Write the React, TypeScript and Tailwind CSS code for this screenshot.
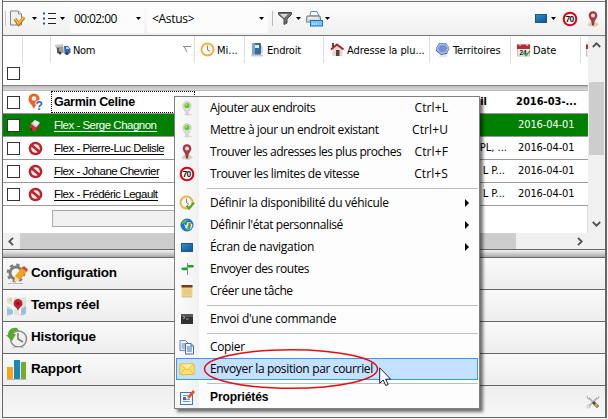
import React from 'react';

const TAHOMA = "font-['DejaVu_Sans_Condensed','DejaVu_Sans',sans-serif]";

function Svg({ w = 16, h = 16, box = '0 0 16 16', className = '', children }: { w?: number; h?: number; box?: string; className?: string; children: React.ReactNode }) {
  return <svg width={w} height={h} viewBox={box} className={`block shrink-0 ${className}`}>{children}</svg>;
}

const Caret = ({ className = '' }: { className?: string }) => (
  <Svg w={5} h={3} box="0 0 5 3" className={className}><path d="M0 0h5L2.5 3z" fill="#000" /></Svg>
);
const PinGreen = () => (
  <Svg>
    <ellipse cx="9" cy="14.5" rx="4" ry="1" fill="#ddd" />
    <path d="M8 1.5a4.3 4.3 0 0 0-4.3 4.3C3.700 8.500 6 10 7.300 14.500h1.500C9.500 10 12.300 8.500 12.300 5.800A4.300 4.300 0 0 0 8 1.500z" fill="#d9dcde" stroke="#b9bdc0" strokeWidth=".5" />
    <circle cx="8" cy="5.500" r="2.600" fill="#62c916" /><circle cx="7.300" cy="4.800" r="1" fill="#a6ec62" />
  </Svg>
);
const PinRed = ({ size = 16 }: { size?: number }) => (
  <Svg w={size} h={size}>
    <path d="M3 13l2-2h6l3 2.500-4 2.500-7-1z" fill="#dccdb4" />
    <path d="M8 .5a4 4 0 0 0-4 4C4 7.500 6.500 8 7.200 13h1.600C9.500 8 12 7.500 12 4.500a4 4 0 0 0-4-4z" fill="#a83a44" stroke="#822932" strokeWidth=".5" />
    <circle cx="8" cy="4.500" r="2" fill="#f0dfe0" /><path d="M6.500 13h3l-1.500 2z" fill="#7d3a38" />
  </Svg>
);
const Speed = () => (
  <Svg>
    <circle cx="8" cy="8" r="6.300" fill="#fff" stroke="#d8040c" strokeWidth="2" />
    <text x="7.600" y="11" textAnchor="middle" fontSize="8.500" fontWeight="700" fontFamily="Liberation Sans" fill="#111" letterSpacing="-.7">70</text>
  </Svg>
);
const Screen = ({ w = 12, h = 9 }: { w?: number; h?: number }) => (
  <Svg w={w} h={h} box="0 0 12 9">
    <defs><linearGradient id="scr" x1="0" y1="0" x2="1" y2="1"><stop stopColor="#2d8dd0" /><stop offset="1" stopColor="#0a5593" /></linearGradient></defs>
    <rect x=".5" y=".5" width="11" height="8" fill="url(#scr)" stroke="#24567c" />
  </Svg>
);
const Clock = ({ check = false }: { check?: boolean }) => (
  <Svg>
    <circle cx="7.500" cy="7.500" r="6" fill="#f8fafc" stroke="#f2af39" strokeWidth="1.800" />
    <path d="M7.500 3.500v4.300l2.500 1.500" fill="none" stroke="#7d7d7d" />
    {check && <path d="M7.500 10.500l2.500 3 5-6" fill="none" stroke="#59ac19" strokeWidth="2.200" />}
  </Svg>
);
const Globe = () => (
  <Svg>
    <circle cx="8" cy="8" r="6.500" fill="#1878bf" />
    <path d="M3 5l3-2.500 3 .500-3 3-3 1z" fill="#67b549" /><path d="M8 5.500l3-.500 2.500 3-1.500 4-4 1-1-3z" fill="#e1f3fa" />
    <path d="M9 8l3 0-1 4-3 1z" fill="#39a936" /><path d="M5 7l3 2-1 3z" fill="#d5ecf7" /><circle cx="10.500" cy="7" r="1.300" fill="#df5145" />
  </Svg>
);
const RouteSign = () => (
  <Svg><path d="M8.500 2v12" stroke="#8a8a8a" /><path d="M8.500 4H14l1 1.300L14 6.600H8.500zM8 6.400H3.500L2 7.800l1.500 1.400H8z" fill="#16a329" /></Svg>
);
const Note = () => (
  <Svg><rect x="2.500" y="2" width="11" height="12" fill="#ecd487" /><path d="M2.500 2h11v2.500h-11z" fill="#75392b" /><path d="M4 7h8M4 9h8M4 11h8" stroke="#dabf6c" strokeWidth=".6" /><path d="M3 14h10" stroke="#c9bd94" /></Svg>
);
const Terminal = () => (
  <Svg><rect x="2" y="3" width="12" height="10" fill="#313131" /><rect x="2" y="3" width="12" height="3" fill="#555" /><path d="M4 5l2 1.500L4 8M7 8h2.500" fill="none" stroke="#ccc" strokeWidth=".8" /></Svg>
);
const CopyIcon = () => (
  <Svg>
    <path d="M1 1.500h5.500L9 4v7.500H1z" fill="#eef5ff" stroke="#6388bd" /><path d="M2.500 5h5M2.500 7h5M2.500 9h5" stroke="#5b83bd" />
    <path d="M6.500 4.500H12L14.500 7v8h-8z" fill="#eef5ff" stroke="#4a6da8" /><path d="M8 8h5M8 10h5M8 12h5" stroke="#4774b5" /><path d="M12 4.500V7h2.500" fill="#b7d0f2" stroke="#4a6da8" />
  </Svg>
);
const Mail = () => (
  <Svg><rect x=".8" y="2.800" width="14.400" height="10.800" rx="1" fill="#ffe27a" stroke="#eeb928" /><path d="M1.500 3.500L8 9l6.500-5.500M1.500 13L6 7.500M14.500 13L10 7.500" fill="none" stroke="#f4bd2a" /><path d="M2.500 3.500h11L8 8z" fill="#fff0ab" /></Svg>
);
const Props = () => (
  <Svg><rect x="1.500" y="3.500" width="12" height="12" fill="#f4f8ff" stroke="#3e76c4" /><path d="M4 6.500h5M4 12.500h7M4 10.500h7" stroke="#6b99dd" /><rect x="4" y="8" width="3" height="3" fill="#456fbc" /><path d="M7.500 10.500l1-3L14 1l2 2-5.500 6.500z" fill="#e4502b" /><path d="M7.500 10.500l1-3 2 2z" fill="#efd3a1" /></Svg>
);
const NoEntry = () => (
  <Svg w={15} h={15}><circle cx="8" cy="8" r="7.300" fill="#bd2428" /><circle cx="8" cy="8" r="4.600" fill="#f9eded" /><path d="M4 4.500l8 7" stroke="#bd2428" strokeWidth="2.800" /></Svg>
);
const Unknown = () => (
  <Svg w={16} h={18} box="0 0 16 18">
    <path d="M6 .5a5.500 5.500 0 0 0-5.500 5.500C.5 9.500 4 11.500 6 16c1.500-4.500 5.500-6.500 5.500-10A5.500 5.500 0 0 0 6 .5z" fill="#ef6322" /><circle cx="6" cy="5.500" r="2.300" fill="#fff" />
    <text x="7.500" y="16.500" fontSize="12" fontWeight="700" fontFamily="Liberation Sans" fill="#1d68b5" stroke="#fff" strokeWidth="1.500" paintOrder="stroke">?</text>
  </Svg>
);
const Car = () => (
  <Svg w={15} h={15}><path d="M3 6l4-4 6 3-4 6z" fill="#c3cbc3" /><path d="M5 5l3-2.500 4 2-3 4z" fill="#eef1ee" /><path d="M1.500 9.500L3 6.500l5.500 4v3l-3 .800z" fill="#d92b38" /><path d="M8.500 10.500L13 5.500l.500 3-5 5z" fill="#7c3a3c" /><circle cx="3.500" cy="12" r="1.200" fill="#26382a" /></Svg>
);
const Truck = () => (
  <Svg w={16} h={14} box="0 0 16 14"><path d="M0 2l8-.500 1 8.500-6-1z" fill="#9c9c9c" /><path d="M0 2l8-.500v2L1 4z" fill="#ccc" /><path d="M3 5v5" stroke="#555" strokeWidth="2" /><path d="M9 3h4l2.500 3v4l-6 1z" fill="#3268ad" /><path d="M11 4h2l1.500 2H11z" fill="#b8d6f0" /><circle cx="5" cy="10" r="1.500" fill="#333" /><circle cx="12" cy="10.500" r="1.600" fill="#263e61" /></Svg>
);
const Pump = () => (
  <Svg w={14} h={15} box="0 0 14 15"><rect x="2" y="1" width="9" height="12" rx="1" fill="#386b9c" /><rect x="2" y="1" width="3" height="12" fill="#78a5cb" /><rect x="5" y="3" width="4" height="3" fill="#dceaf4" /><path d="M11 4l1 1v6" stroke="#9bb5c9" fill="none" /><path d="M1 13.500h12" stroke="#c5cbd0" strokeWidth="2" /></Svg>
);
const House = () => (
  <Svg w={15} h={15} box="0 0 15 15"><path d="M2.500 7L7.500 3l5 4v7h-10z" fill="#ded9d3" /><path d="M1 7.500L7 2.500l6.500 5" fill="none" stroke="#aa2729" strokeWidth="2" /><path d="M3 1v4" stroke="#982d2d" strokeWidth="2" /><rect x="6" y="8" width="3.500" height="6" fill="#653d35" /></Svg>
);
const Hexagon = () => (
  <Svg w={15} h={15} box="0 0 15 15"><path d="M4 1h7l3.500 5-2.500 6-6 1L1 9V6z" fill="#4766b0" /><path d="M4.500 2h6l3 4-2 4.500-5.500 1L2 8V6z" fill="#91a9df" stroke="#d4def5" strokeWidth=".7" /><path d="M5.500 3.500H10l2 2.500-2 3.500-4.500.500L3.500 7z" fill="#7390d2" /><path d="M4 14h8" stroke="#ccc" /></Svg>
);
const Calendar = ({ partial = false }: { partial?: boolean }) => (
  <Svg w={partial ? 2 : 14} h={14} box={partial ? '0 0 2 14' : '0 0 14 14'}><rect x=".5" y="2" width="12" height="11" fill="#eee" stroke="#c3c3c3" /><path d="M0 1.500h13V6H0z" fill="#bd2930" /><path d="M3 0v3M10 0v3" stroke="#eee" />{!partial && <text x="2.500" y="11.700" fontSize="6.500" fontWeight="700" fontFamily="Liberation Sans" fill="#111">24</text>}{!partial && <path d="M7 10l2 2.500L13 8" stroke="#42a82d" strokeWidth="1.700" fill="none" />}</Svg>
);

function HeaderCell({ cls, icon, label, text }: { cls: string; icon: React.ReactNode; label: string; text: string }) {
  return (
    <div className={`flex h-[27px] shrink-0 items-center overflow-hidden border-r border-[#dedede] ${cls}`}>
      {icon}<span className={`whitespace-nowrap pt-[3px] text-[11px] ${text}`}>{label}</span>
    </div>
  );
}

const Check = () => <span className="block size-[13px] shrink-0 border border-[#333] bg-white" />;

const rows = [
  { name: 'Garmin Celine', icon: <Unknown />, place: 'il', date: '2016-03-...', kind: 'bold', track: 'tracking-[-0.3px]' },
  { name: 'Flex - Serge Chagnon', icon: <Car />, place: '', date: '2016-04-01', kind: 'green', track: 'tracking-[-0.5px]' },
  { name: 'Flex - Pierre-Luc Delisle', icon: <NoEntry />, place: 'PL, ...', date: '2016-04-01', kind: '', track: 'tracking-[-0.5px]' },
  { name: 'Flex - Johane Chevrier', icon: <NoEntry />, place: 'L P...', date: '2016-04-01', kind: '', track: 'tracking-[-0.5px]' },
  { name: 'Flex - Frédéric Legault', icon: <NoEntry />, place: 'L P...', date: '2016-04-01', kind: '', track: 'tracking-[-0.5px]' },
];

function Row({ r }: { r: (typeof rows)[number] }) {
  const bold = r.kind === 'bold';
  const green = r.kind === 'green';
  return (
    <div className={`flex h-[23px] items-center border-b border-[#999] ${green ? 'bg-[#008000] text-white' : ''}`}>
      <div className="flex w-[17px] justify-end"><Check /></div>
      <div className="flex w-[31px] justify-center">{r.icon}</div>
      <div className={`flex h-[22px] w-[144px] items-center ${bold ? 'border border-dotted border-black pl-[2px]' : 'pl-[3px]'}`}>
        <span className={`whitespace-nowrap font-['Liberation_Sans',sans-serif] ${bold ? 'text-[12.500px] font-bold leading-[14px]' : 'border-b border-current pt-px text-[11.5px] leading-[12px]'} ${r.track}`}>{r.name}</span>
      </div>
      <div className={`flex w-[312px] justify-end whitespace-pre pt-px text-[11px] ${TAHOMA} ${bold ? 'pr-5 font-bold' : r.place.startsWith('P') ? 'pr-0' : 'pr-0.5'}`}>{r.place}</div>
      <div className={`whitespace-nowrap pt-px text-[11px] ${TAHOMA} ${bold ? 'pl-[9px] font-bold' : 'pl-[11px] tracking-[-0.1px]'}`}>{r.date}</div>
    </div>
  );
}

const Gear = () => (
  <Svg w={22} h={22} box="0 0 22 22">
    <circle cx="10" cy="10" r="6" fill="none" stroke="#7c7c7c" strokeWidth="3" /><circle cx="10" cy="10" r="8.300" fill="none" stroke="#7c7c7c" strokeWidth="2.200" strokeDasharray="3.260 3.260" />
    <path d="M2 20.500h15" stroke="#bbb" /><path d="M9 13l7-8 4.500 4-7 8-5 2z" fill="#f5a11c" /><path d="M16 5l2-2 4 3.500L20.500 9z" fill="#e24524" /><path d="M9 13l4.500 4-5 2z" fill="#f8dbad" />
  </Svg>
);
const MapIcon = () => (
  <Svg w={21} h={22} box="0 0 21 22"><path d="M1 3l6-1 7 1 6-1v17l-6 1.500-7-1.500-6 1.500z" fill="#dfe1da" /><path d="M1 9l19 10M7 2v17M14 4v15" stroke="#fff" strokeWidth="1.500" /><path d="M1 13l6 2v4l-6 1.500zM15 14l5-3v8l-5 1.500z" fill="#99c1d9" /><path d="M2 4l4-1v5z" fill="#f2d181" /><path d="M12 4a4.500 4.500 0 0 0-4.500 4.500C7.500 12 11 12 12 16c1-4 4.500-4 4.500-7.500A4.500 4.500 0 0 0 12 4z" fill="#c52031" /><circle cx="12" cy="8.500" r="1.500" fill="#681722" /></Svg>
);
const History = () => (
  <Svg w={22} h={22} box="0 0 22 22"><circle cx="12.500" cy="12" r="8" fill="#f0f1ed" stroke="#888b87" strokeWidth="1.500" /><path d="M12 6v6l5 3" fill="none" stroke="#777" strokeWidth="1.500" /><path d="M11 1C5 0 2 4 2 8H0l6 6 4-7H7c0-2 2-4 6-3z" fill="#58a830" /><path d="M6 20.500h12" stroke="#ccc" /></Svg>
);
const Bars = () => (
  <Svg w={21} h={22} box="0 0 21 22"><rect x="1" y="8" width="6" height="12" fill="#f3a51c" /><rect x="8" y="1" width="6" height="19" fill="#1688bb" /><rect x="15" y="3" width="5" height="17" fill="#72ad2d" /><path d="M1 20.500h19" stroke="#bbb" /></Svg>
);

function Nav({ icon, label }: { icon: React.ReactNode; label: string }) {
  return (
    <div className="flex h-8 items-center border-b border-[#666] bg-linear-to-b from-[#f9f9f9] to-[#eeeeee] pl-[3px] font-['Liberation_Sans',sans-serif] text-[13.500px] font-bold tracking-[-0.2px]">
      <span className="w-[25px]">{icon}</span>{label}
    </div>
  );
}

type Item = { label: string; key?: string; sub?: boolean; icon: React.ReactNode; hot?: boolean; bold?: boolean; t: string };
const groups: Item[][] = [
  [
    { label: 'Ajouter aux endroits', key: 'Ctrl+L', icon: <PinGreen />, t: 'tracking-[-0.45px]' },
    { label: 'Mettre à jour un endroit existant', key: 'Ctrl+U', icon: <PinGreen />, t: 'tracking-[-0.42px]' },
    { label: 'Trouver les adresses les plus proches', key: 'Ctrl+F', icon: <PinRed />, t: 'tracking-[-0.46px]' },
    { label: 'Trouver les limites de vitesse', key: 'Ctrl+S', icon: <Speed />, t: 'tracking-[-0.39px]' },
  ],
  [
    { label: 'Définir la disponibilité du véhicule', sub: true, icon: <Clock check />, t: 'tracking-[-0.29px]' },
    { label: "Définir l'état personnalisé", sub: true, icon: <Globe />, t: 'tracking-[-0.39px]' },
    { label: 'Écran de navigation', sub: true, icon: <Screen />, t: 'tracking-[-0.3px]' },
    { label: 'Envoyer des routes', icon: <RouteSign />, t: 'tracking-[-0.45px]' },
    { label: 'Créer une tâche', icon: <Note />, t: 'tracking-[-0.45px]' },
  ],
  [{ label: "Envoi d'une commande", icon: <Terminal />, t: 'tracking-[-0.25px]' }],
  [
    { label: 'Copier', icon: <CopyIcon />, t: 'tracking-[-0.35px]' },
    { label: 'Envoyer la position par courriel', icon: <Mail />, hot: true, t: 'tracking-[-0.35px]' },
  ],
  [{ label: 'Propriétés', icon: <Props />, bold: true, t: 'tracking-[-0.1px]' }],
];

function Menu() {
  return (
    <div className="absolute left-[174px] top-[96px] h-[313px] w-[306px] border border-[#808080] bg-[#fdfdfd] shadow-[3px_3px_3px_rgba(0,0,0,0.55)]">
      <div className="flex h-full flex-col bg-linear-to-r from-[#fcfcfc] to-[#f1f1f1] bg-[length:24px_100%] bg-no-repeat font-['Open_Sans',sans-serif] text-[12px]">
        {groups.map((g, i) => (
          <React.Fragment key={i}>
            {i > 0 && <div className={`ml-8 mr-px flex shrink-0 items-center ${i === 1 ? 'h-[7px]' : 'h-[6px]'}`}><span className="h-px w-full bg-[#bdbdbd]" /></div>}
            {g.map((m) => (
              <div key={m.label} className={`mx-px flex h-[22px] shrink-0 items-center border pl-px ${m.hot ? 'border-[#3399ff] bg-[#c4e1ff]' : 'border-transparent'}`}>
                <span className="flex w-[18px] justify-center">{m.icon}</span>
                <span className={`ml-[14px] flex-1 whitespace-nowrap ${m.bold ? "font-['Liberation_Sans',sans-serif] text-[12px] font-bold" : ''} ${m.t}`}>{m.label}</span>
                {m.key && <span className="mr-[29px] tracking-[0.1px]">{m.key}</span>}
                {m.sub && <Svg w={4} h={8} box="0 0 4 8" className="mr-2"><path d="M0 0l4 4-4 4z" fill="#000" /></Svg>}
              </div>
            ))}
          </React.Fragment>
        ))}
      </div>
    </div>
  );
}

export default function App() {
  return (
    <div className="relative h-[419px] w-[608px] overflow-hidden bg-[#f4f4f4] text-black">
      <div className="ml-[2px] flex h-[418px] w-[605px] flex-col border-b border-l border-r-2 border-[#666] pt-px">
        <div className="flex h-[35px] shrink-0 items-center border-y border-[#777] bg-linear-to-b from-[#fdfdfd] to-[#f0f0f0] pl-[2px]">
          <span className="h-[15px] w-px bg-[#c5c5c5]" />
          <Svg w={17} h={17} box="0 0 17 17" className="ml-[3px]"><path d="M1.500 1h8l3 3v11h-11z" fill="#f1f1f1" stroke="#858585" /><path d="M9.500 1v3h3" fill="#fff" stroke="#858585" /><path d="M6 9l3.500 5L15 7.500" fill="none" stroke="#b56b13" strokeWidth="3.400" /><path d="M6 9l3.500 4.500L15 7" fill="none" stroke="#f8b83a" strokeWidth="2" /></Svg>
          <Caret className="ml-[6px]" />
          <Svg w={13} h={13} box="0 0 13 13" className="ml-[6px]"><path d="M0 1.500h2M0 6.500h2M0 11.500h2" stroke="#25529d" strokeWidth="2" /><path d="M5 1.500h8M5 6.500h8M5 11.500h8" stroke="#222" /></Svg>
          <Caret className="ml-[4px]" />
          <div className="ml-[5px] flex h-[28px] w-[74px] items-center bg-[#fcfcfc] pl-[4px] font-['Open_Sans',sans-serif] text-[12px] tracking-[-0.6px]">00:02:00<Caret className="ml-auto mr-[3px]" /></div>
          <div className="ml-[3px] flex h-[28px] w-[121px] items-center bg-[#fcfcfc] pl-[5px] font-['Open_Sans',sans-serif] text-[12px] tracking-[-0.3px]">&lt;Astus&gt;<Caret className="ml-auto mr-[4px]" /></div>
          <span className="ml-[4px] h-[15px] w-px bg-[#bbb]" />
          <Svg w={14} h={13} box="0 0 14 13" className="ml-[5px]"><path d="M.5.5h13v2L9 7v4l-3 1.500V7L.5 2.500z" fill="#727272" stroke="#444" /><path d="M2 2h8L6 6z" fill="#ddd" /></Svg>
          <Caret className="ml-[4px]" />
          <Svg w={17} h={16} box="0 0 17 16" className="ml-[5px]"><path d="M4 5l1-4.500h6L13 5z" fill="#fff" stroke="#5590cd" /><path d="M1 5h13l1 6H0z" fill="#d4d4d4" stroke="#777" /><path d="M2 7h10" stroke="#fff" /><rect x="4.500" y="9.500" width="12" height="5.500" fill="#79c3f7" stroke="#1975ca" /><path d="M6 13h1M8 13h1M10 13h1" stroke="#fff" /></Svg>
          <Caret className="ml-[2px]" />
          <div className="ml-auto flex items-center pr-[4px]"><Screen w={12} h={9} /><Caret className="ml-[4px]" /><span className="ml-[6px]"><Speed /></span><span className="ml-[7px]"><PinRed /></span></div>
        </div>

        <div className="flex h-[197px] shrink-0 bg-white">
          <div className="w-[585px] overflow-hidden">
            <div className={`flex h-[27px] ${TAHOMA}`}>
              <div className="w-[20px] shrink-0 border-r border-[#dedede]" /><div className="w-[28px] shrink-0 border-r border-[#dedede]" />
              <div className="flex w-[144px] shrink-0 items-center border-r border-[#dedede] pl-[4px] text-[11px]"><Truck /><span className="ml-[2px] pt-[3px] tracking-[-0.3px]">Nom</span><Svg w={8} h={7} box="0 0 8 7" className="ml-auto mr-[3px]"><path d="M0 .5h8M1.500 1l2.500 5" fill="none" stroke="#888" /></Svg></div>
              <HeaderCell cls="w-[50px] pl-[5px]" icon={<Clock />} label="Mi..." text="ml-px" />
              <HeaderCell cls="w-[79px] pl-[5px]" icon={<Pump />} label="Endroit" text="ml-[3px] tracking-[-0.2px]" />
              <HeaderCell cls="w-[106px] pl-[6px]" icon={<House />} label="Adresse la plu..." text="ml-[2px] tracking-[-0.08px]" />
              <HeaderCell cls="w-[81px] pl-[5px]" icon={<Hexagon />} label="Territoires" text="ml-[3px] tracking-[-0.1px]" />
              <HeaderCell cls="w-[70px] pl-[6px]" icon={<Calendar />} label="Date" text="ml-[2px] tracking-[-0.1px]" />
              <div className="flex items-center pl-[5px]"><Calendar partial /></div>
            </div>
            <div className="flex h-[22px] items-center pl-[4px]"><span className="-mt-px"><Check /></span></div>
            <div className="h-[6px] border-b border-t border-b-[#bbb] border-t-[#888] bg-linear-to-b from-[#bcbcbc] to-[#d8d8d8]" />
            <div className="h-[115px]">{rows.map((r) => <Row key={r.name} r={r} />)}</div>
            <div className="flex h-[27px] border-r border-[#ddd] pl-[49px] pt-[4px]"><div className="h-[17px] w-[420px] border border-[#aaa] bg-[#f0f0f0]" /></div>
          </div>
          <div className="flex w-[17px] flex-col items-center bg-[#f0f0f0]">
            <Svg w={9} h={6} box="0 0 9 6" className="mt-[6px]"><path d="M.8 5l3.700-3.700L8.200 5" fill="none" stroke="#505050" strokeWidth="1.800" /></Svg>
            <div className="mt-[34px] h-[73px] w-[15px] bg-[#cdcdcd]" />
            <Svg w={9} h={6} box="0 0 9 6" className="mb-[6px] mt-auto"><path d="M.8 1l3.700 3.700L8.200 1" fill="none" stroke="#505050" strokeWidth="1.800" /></Svg>
          </div>
        </div>
        <div className="flex h-[17px] shrink-0 items-center border-b border-[#666] bg-[#f0f0f0] pl-[5px]">
          <Svg w={6} h={9} box="0 0 6 9"><path d="M5 .8L1.300 4.500 5 8.200" fill="none" stroke="#505050" strokeWidth="1.800" /></Svg>
          <div className="ml-[6px] h-full w-[496px] bg-[#cdcdcd]" />
          <Svg w={6} h={9} box="0 0 6 9" className="ml-[61px]"><path d="M1 .8l3.700 3.700L1 8.200" fill="none" stroke="#505050" strokeWidth="1.800" /></Svg>
        </div>
        <div className="h-[8px] shrink-0 border-b border-[#666] bg-linear-to-b from-[#f4f4f4] to-[#aaa]" />
        <Nav icon={<Gear />} label="Configuration" />
        <Nav icon={<MapIcon />} label="Temps réel" />
        <Nav icon={<History />} label="Historique" />
        <Nav icon={<Bars />} label="Rapport" />
        <div className="flex flex-1 items-center justify-end bg-linear-to-b from-[#eee] to-[#f7f7f7] pr-[5px]">
          <Svg w={14} h={14} box="0 0 14 14"><path d="M3 3l8 8M11 3l-8 8" stroke="#b8b8b8" strokeWidth="1.800" /><path d="M1 1l1 3 2-1M13 1l-1 3-2-1" fill="none" stroke="#aaa" /><circle cx="2.500" cy="11.500" r="1.500" fill="none" stroke="#bbb" /><path d="M7 7l5 5" stroke="#4c4c40" strokeWidth="3" /><path d="M9 9l2.500 2.500" stroke="#ddb527" strokeWidth="2" /></Svg>
        </div>
      </div>
      <Menu />
      <Svg w={176} h={42} box="0 0 176 42" className="pointer-events-none absolute left-[203px] top-[348px]"><ellipse cx="88" cy="21" rx="86.500" ry="19.300" fill="none" stroke="#e80c12" strokeWidth="1.500" /></Svg>
      <Svg w={13} h={20} box="0 0 13 20" className="pointer-events-none absolute left-[379px] top-[367px]"><path d="M.7.8v15.500l3.500-3.300 2.500 5.500 2.500-1-2.500-5.300h5z" fill="#fff" stroke="#15203c" strokeWidth="1" /></Svg>
    </div>
  );
}
